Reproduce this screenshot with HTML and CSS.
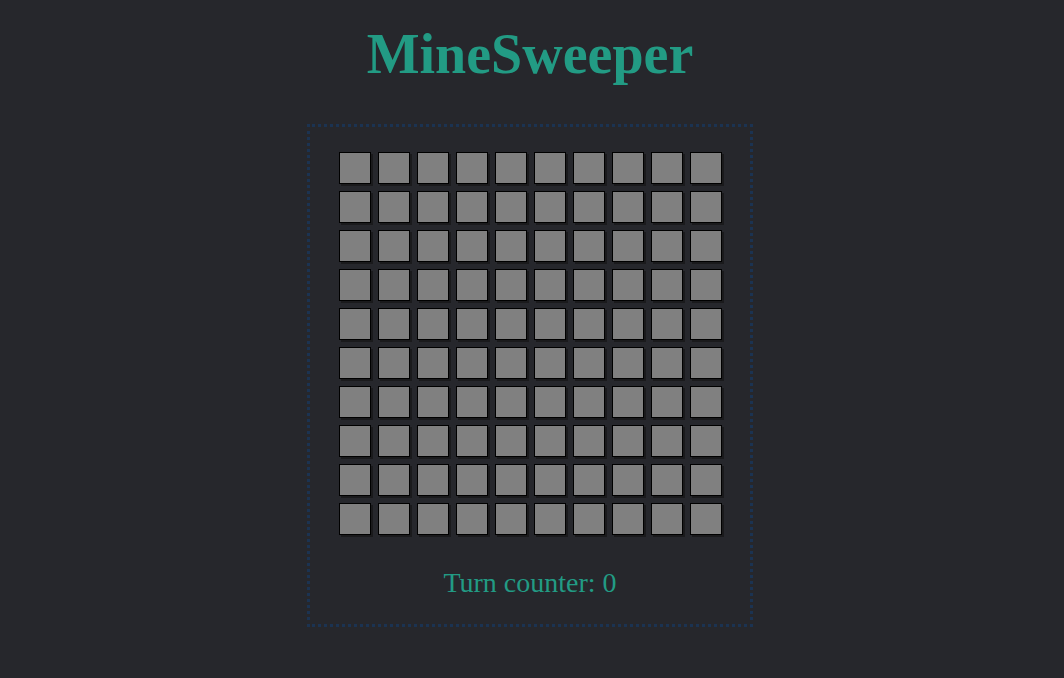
FILE: index.html
```html
<!DOCTYPE html>
<html lang="en">
<head>
<meta charset="UTF-8">
<meta name="viewport" content="width=device-width, initial-scale=1.0">
<title>MineSweeper</title>
<link rel="stylesheet" href="styles.css">
</head>
<body>

<h1 class="title">MineSweeper</h1>

<div class="board">
    <div class="grid" id="grid"></div>
    <p class="counter">Turn counter: <span id="turns">0</span></p>
</div>

<script>
var grid = document.getElementById('grid');
for (var i = 0; i < 100; i++) {
    var cell = document.createElement('div');
    cell.className = 'cell';
    grid.appendChild(cell);
}
</script>

</body>
</html>
```

FILE: styles.css
```css
body {
    font-family: "Liberation Serif", "Times New Roman", serif;
    background-color: #26272c;
    margin: 0;
    padding: 0 4px 0 0;
}
.title {
    margin: 0;
    padding-top: 22px;
    font-size: 56px;
    line-height: 64px;
    font-weight: bold;
    text-align: center;
    color: #229b84;
}
.board {
    width: 440px;
    margin: 38px auto 0;
    padding: 25px 0;
    border: 3px dotted #1b3352;
}
.grid {
    display: grid;
    grid-template-columns: repeat(10, 32px);
    gap: 7px;
    justify-content: center;
}
.cell {
    width: 32px;
    height: 32px;
    box-sizing: border-box;
    background-color: #808080;
    border: 1px solid #000;
    box-shadow: 2px 2px 0 #1a1a1c;
}
.counter {
    margin: 32px 0 0;
    font-size: 28px;
    line-height: 32px;
    text-align: center;
    color: #229b84;
}
```
